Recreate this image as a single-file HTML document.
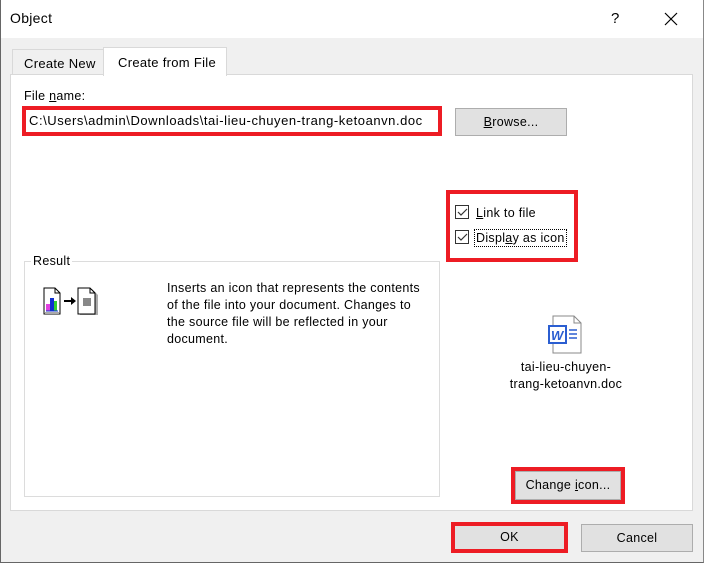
<!DOCTYPE html>
<html><head><meta charset="utf-8"><style>
*{margin:0;padding:0;box-sizing:border-box}
body{width:704px;height:563px;position:relative;background:#f0f0f0;font-family:"Liberation Sans",sans-serif;font-size:12.5px;letter-spacing:0.3px;color:#000;overflow:hidden}
.a{position:absolute}
.btn{position:absolute;background:#e1e1e1;border:1px solid #adadad;text-align:center;font-size:12.5px}
.red{position:absolute;border:4px solid #ed1c24}
.cb{position:absolute;width:14px;height:14px;border:1px solid #333;background:#fff}
u{text-decoration:underline}
</style></head><body>
<div class="a" style="left:0;top:0;width:704px;height:563px;border-left:1px solid #666;border-bottom:1px solid #666;border-right:1px solid #888"></div>
<div class="a" style="left:1px;top:0;width:702px;height:38px;background:#fff"></div>
<div class="a" style="left:10px;top:10px;font-size:14px">Object</div>
<div class="a" style="left:611px;top:10px;font-size:15px">?</div>
<svg class="a" style="left:664px;top:12px" width="14" height="14"><path d="M1 1L13 13M13 1L1 13" stroke="#000" stroke-width="1.2"/></svg>
<div class="a" style="left:12px;top:49px;width:92px;height:26px;border:1px solid #d9d9d9;border-bottom:none;background:#f0f0f0"></div>
<div class="a" style="left:24px;top:56px;font-size:13px">Create New</div>
<div class="a" style="left:10px;top:74px;width:683px;height:437px;border:1px solid #d9d9d9;background:#fff"></div>
<div class="a" style="left:103px;top:47px;width:124px;height:29px;border:1px solid #d9d9d9;border-bottom:none;background:#fff"></div>
<div class="a" style="left:118px;top:55px;font-size:13px">Create from File</div>
<div class="a" style="left:24px;top:89px">File <u>n</u>ame:</div>
<div class="a" style="left:24px;top:109px;width:414px;height:24px;background:#fff"></div>
<div class="red" style="left:22px;top:106px;width:420px;height:30px"></div>
<div class="a" style="left:29px;top:113px;font-size:13px;letter-spacing:0.55px">C:\Users\admin\Downloads\tai-lieu-chuyen-trang-ketoanvn.doc</div>
<div class="btn" style="left:455px;top:108px;width:112px;height:28px;line-height:26px"><u>B</u>rowse...</div>
<div class="red" style="left:446px;top:190px;width:132px;height:72px"></div>
<div class="cb" style="left:455px;top:205px"></div>
<svg class="a" style="left:457px;top:208px" width="11" height="9"><path d="M1 4L4 7L10 1" fill="none" stroke="#333" stroke-width="1.2"/></svg>
<div class="a" style="left:476px;top:206px"><u>L</u>ink to file</div>
<div class="cb" style="left:455px;top:230px"></div>
<svg class="a" style="left:457px;top:233px" width="11" height="9"><path d="M1 4L4 7L10 1" fill="none" stroke="#333" stroke-width="1.2"/></svg>
<div class="a" style="left:474px;top:229px;border:1px dotted #000;padding:1px 1px;line-height:14px">Displ<u>a</u>y as icon</div>
<div class="a" style="left:24px;top:261px;width:416px;height:236px;border:1px solid #dcdcdc"></div>
<div class="a" style="left:31px;top:254px;background:#fff;padding:0 2px">Result</div>
<svg class="a" style="left:42px;top:287px" width="64" height="30">
<path d="M2 1H13L18 6V27H2Z" fill="#fff" stroke="#000"/><path d="M13 1V6H18" fill="none" stroke="#000"/>
<path d="M3 26H17" stroke="#aaa" stroke-width="2"/>
<rect x="4" y="17" width="4" height="7" fill="#e040e0"/><rect x="8" y="11" width="4" height="13" fill="#1030d0"/><rect x="12" y="14" width="3" height="10" fill="#30d030"/>
<path d="M4 24H16" stroke="#1030d0"/>
<path d="M22 14H30" stroke="#000" stroke-width="2"/><path d="M29 10L34 14L29 18Z" fill="#000"/>
<path d="M38 2H50L56 8V28H38Z" fill="#aaa"/>
<path d="M36 1H48L53 6V27H36Z" fill="#fff" stroke="#000"/><path d="M48 1V6H53" fill="none" stroke="#000"/>
<rect x="41" y="11" width="8" height="8" fill="#888"/></svg>
<div class="a" style="left:167px;top:280px;line-height:17px;width:255px">Inserts an icon that represents the contents of the file into your document. Changes to the source file will be reflected in your document.</div>
<svg class="a" style="left:546px;top:315px" width="38" height="40">
<path d="M7 1H28L35 8V38H7Z" fill="#fff" stroke="#888"/><path d="M28 1V8H35" fill="none" stroke="#888"/>
<rect x="2" y="10" width="19" height="19" fill="#2b5ed1"/><rect x="4" y="12" width="15" height="15" fill="#fff"/>
<text x="5" y="25" font-family="Liberation Sans" font-weight="bold" font-style="italic" font-size="13" fill="#2b5ed1">W</text>
<path d="M23 15H31M23 19H31M23 23H31" stroke="#2b5ed1" stroke-width="1.5"/></svg>
<div class="a" style="left:496px;top:359px;width:140px;text-align:center;line-height:17px">tai-lieu-chuyen-<br>trang-ketoanvn.doc</div>
<div class="red" style="left:511px;top:467px;width:114px;height:37px"></div>
<div class="btn" style="left:515px;top:471px;width:106px;height:29px;line-height:27px">Change <u>i</u>con...</div>
<div class="red" style="left:451px;top:522px;width:117px;height:31px"></div>
<div class="btn" style="left:455px;top:526px;width:109px;height:23px;line-height:23px;border:none">OK</div>
<div class="btn" style="left:581px;top:524px;width:112px;height:28px;line-height:26px">Cancel</div>
</body></html>
